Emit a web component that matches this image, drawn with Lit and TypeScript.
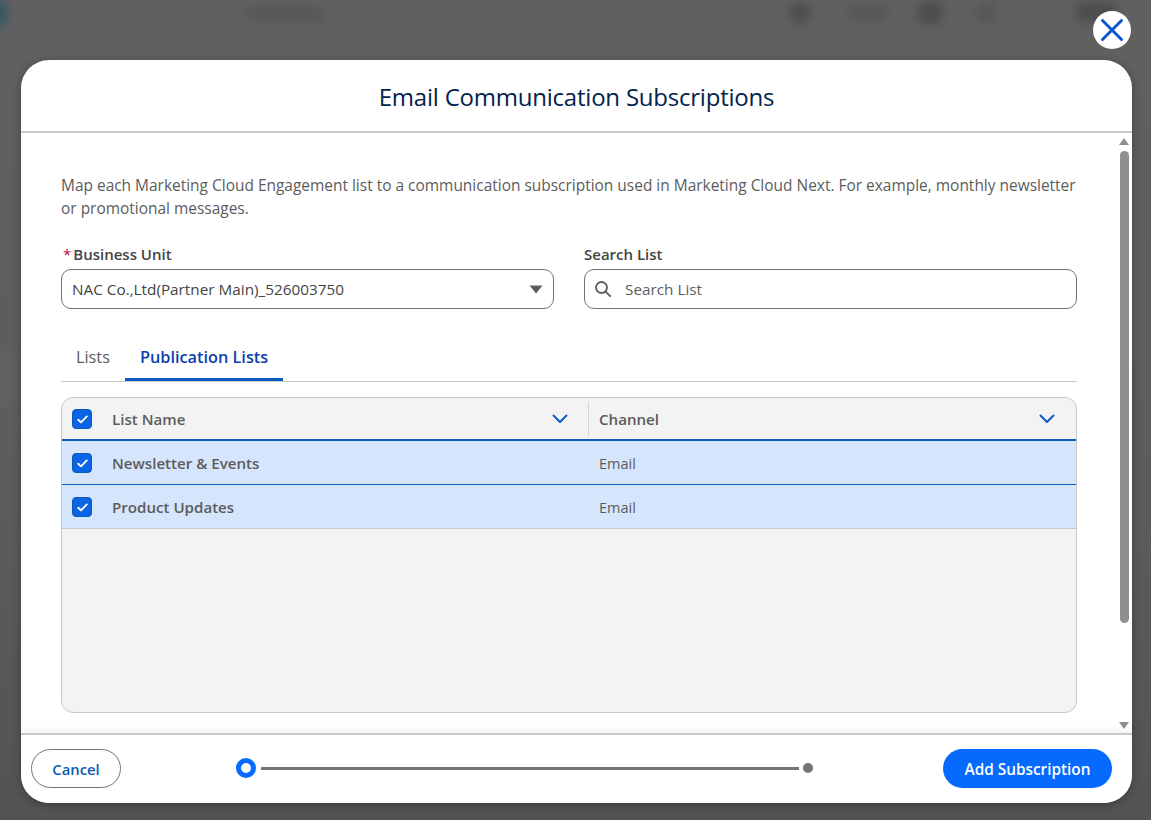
import { LitElement, html, css, svg } from 'lit';
import { customElement } from 'lit/decorators.js';

const chevron = svg`<svg class="chev" width="16" height="10" viewBox="0 0 16 10"><path d="M1.5 1.5 8 8l6.5-6.5" fill="none" stroke="#0b57c9" stroke-width="2" stroke-linecap="round" stroke-linejoin="round"/></svg>`;

const rows = [
  { name: 'Newsletter & Events', channel: 'Email' },
  { name: 'Product Updates', channel: 'Email' },
];

@customElement('app-root')
export class AppRoot extends LitElement {
  static styles = css`
    :host {
      display: block;
      position: relative;
      height: 820px;
      overflow: hidden;
      background: linear-gradient(#606060, #5c5c5c 60%, #535353);
      font-family: 'Open Sans', 'Noto Sans', sans-serif;
      color: #444;
      box-sizing: border-box;
      padding: 60px 19px 17px 21px;
    }
    * { box-sizing: border-box; }

    .backdrop { position: absolute; inset: 0; filter: blur(5px); }
    .smudge { position: absolute; background: #4d4d4d; border-radius: 6px; }
    .smudge.teal { background: #2f5766; }
    .smudge.pale { background: #646464; }
    .smudge.faint { background: #565656; }

    .close {
      position: absolute;
      top: 11px;
      left: 1093px;
      width: 38px;
      height: 38px;
      border-radius: 50%;
      background: #fff;
      border: 0;
      padding: 0;
      display: flex;
      align-items: center;
      justify-content: center;
    }

    .modal {
      position: relative;
      height: 743px;
      background: #fff;
      border-radius: 28px;
      display: flex;
      flex-direction: column;
      overflow: hidden;
      box-shadow: 0 2px 8px rgba(0, 0, 0, 0.3);
    }

    .head {
      height: 73px;
      flex: none;
      border-bottom: 2px solid #c9c9c9;
      display: flex;
      align-items: center;
      justify-content: center;
      padding-top: 2px;
    }
    h1 {
      margin: 0;
      font-size: 24px;
      font-weight: 400;
      color: #03234d;
      letter-spacing: -0.22px;
    }

    .scroll { flex: 1; min-height: 0; position: relative; display: flex; }
    .body { flex: 1; min-width: 0; padding: 41px 42px 0 40px; }

    .intro {
      margin: 0 0 24px;
      font-size: 15.46px;
      line-height: 23px;
      color: #5c5c5c;
    }

    .fields { display: grid; grid-template-columns: 493px 493px; column-gap: 30px; }
    .field label {
      display: block;
      font-size: 15px;
      font-weight: 600;
      line-height: 20px;
      color: #444;
      margin-bottom: 5px;
    }
    .req { color: #b5084f; margin-right: 2px; margin-left: 2px; font-weight: 400; }
    .input {
      height: 40px;
      border: 1px solid #747474;
      border-radius: 10px;
      display: flex;
      align-items: center;
      font-size: 15.3px;
      color: #444;
      padding: 0 10px;
    }
    .input .grow { flex: 1; }
    .input .search { margin-left: -1px; }
    .input .ph { color: #5c5c5c; margin-left: 13px; flex: 1; }

    .tabs {
      margin-top: 28px;
      height: 45px;
      border-bottom: 1px solid #c9c9c9;
      display: flex;
    }
    .tab {
      font-size: 16.3px;
      line-height: 40px;
      padding: 0 15px;
      color: #5c5c5c;
      height: 44px;
    }
    .tab.on {
      color: #0b3fb0;
      font-weight: 600;
      border-bottom: 3px solid #0b5cc0;
    }

    .table {
      margin-top: 15px;
      height: 316px;
      border: 1px solid #c9c9c9;
      border-radius: 12px;
      background: #f3f3f3;
      overflow: hidden;
    }
    .row {
      height: 44px;
      display: grid;
      grid-template-columns: 526px 1fr;
      align-items: center;
      font-size: 15.1px;
      color: #5c5c5c;
    }
    .row.top { height: 43px; border-bottom: 2px solid #0b5cb5; }
    .row.sel { background: #d5e5fc; border-bottom: 1px solid #0b5cb5; font-size: 14.5px; }
    .row.sel.last { border-bottom: 1px solid #c9c9c9; }
    .cell { display: flex; align-items: center; height: 100%; }
    .first { padding-left: 10px; padding-right: 20px; }
    .second { padding-left: 11px; padding-right: 21px; }
    .sel .second { padding-top: 1px; }
    .top .second { border-left: 1px solid #d4d4d4; height: 34px; padding-left: 10px; }
    .top .cell { font-weight: 600; }
    .sel .first { font-weight: 600; font-size: 15.1px; }
    .cell .text { flex: 1; }
    .check {
      width: 20px;
      height: 20px;
      border-radius: 4px;
      background: #0b63e5;
      border: 1px solid #0b5cb5;
      display: flex;
      align-items: center;
      justify-content: center;
      margin: 1px 20px 0 0;
      flex: none;
    }

    .bar { width: 13px; flex: none; position: relative; }
    .thumb {
      position: absolute;
      top: 18px;
      left: 1px;
      width: 9px;
      height: 472px;
      border-radius: 5px;
      background: #8f8f8f;
    }
    .arrow { position: absolute; left: 0; }
    .arrow.up { top: 5px; }
    .arrow.down { bottom: 4px; }

    .foot {
      position: relative;
      height: 70px;
      flex: none;
      border-top: 2px solid #c9c9c9;
      box-shadow: 0 -3px 5px rgba(0, 0, 0, 0.05);
      background: #fff;
      display: flex;
      align-items: center;
      padding: 0 20px 2px 10px;
    }
    .btn {
      height: 39px;
      border-radius: 20px;
      font-family: inherit;
      font-weight: 600;
      padding: 1px 0 0;
    }
    .cancel { width: 90px; background: #fff; border: 1px solid #747474; color: #0b5cb5; font-size: 14.8px; }
    .add { width: 169px; background: #066afe; border: 0; color: #fff; font-size: 15.35px; margin-left: auto; }

    .steps { display: flex; align-items: center; width: 577px; margin-left: 115px; }
    .dot-on { width: 20px; height: 20px; border-radius: 50%; border: 5px solid #066afe; background: #fff; flex: none; }
    .line { flex: 1; height: 3px; background: #747474; margin: 0 4px 0 5px; }
    .dot { width: 10px; height: 10px; border-radius: 50%; background: #747474; flex: none; }
  `;

  renderCheck() {
    return html`<span class="check">
      <svg width="11" height="9" viewBox="0 0 11 9"><path d="M1.2 4.8 4 7.4l5.8-6" fill="none" stroke="#fff" stroke-width="1.9" stroke-linecap="round" stroke-linejoin="round"/></svg>
    </span>`;
  }

  render() {
    return html`
      <div class="backdrop">
        <div class="smudge teal" style="left:-6px;top:0;width:12px;height:26px"></div>
        <div class="smudge pale" style="left:0;top:350px;width:10px;height:60px"></div>
        <div class="smudge faint" style="left:246px;top:8px;width:78px;height:12px"></div>
        <div class="smudge" style="left:790px;top:3px;width:20px;height:20px"></div>
        <div class="smudge faint" style="left:848px;top:6px;width:40px;height:14px"></div>
        <div class="smudge" style="left:918px;top:2px;width:24px;height:22px"></div>
        <div class="smudge faint" style="left:976px;top:4px;width:20px;height:18px"></div>
        <div class="smudge" style="left:1076px;top:2px;width:40px;height:20px"></div>
      </div>

      <div class="modal">
        <div class="head"><h1>Email Communication Subscriptions</h1></div>
        <div class="scroll">
          <div class="body">
            <p class="intro">Map each Marketing Cloud Engagement list to a communication subscription used in Marketing Cloud Next. For example, monthly newsletter or promotional messages.</p>
            <div class="fields">
              <div class="field">
                <label><span class="req">*</span>Business Unit</label>
                <div class="input">
                  <span class="grow">NAC Co.,Ltd(Partner Main)_526003750</span>
                  <svg width="14" height="9" viewBox="0 0 14 9"><path d="M.5.5h13L7 8.5z" fill="#5c5c5c"/></svg>
                </div>
              </div>
              <div class="field">
                <label>Search List</label>
                <div class="input">
                  <svg class="search" width="18" height="18" viewBox="0 0 18 18"><circle cx="7.5" cy="7.5" r="5.5" fill="none" stroke="#5c5c5c" stroke-width="1.8"/><path d="m11.6 11.6 4.6 4.6" stroke="#5c5c5c" stroke-width="1.8" stroke-linecap="round"/></svg>
                  <span class="ph">Search List</span>
                </div>
              </div>
            </div>

            <div class="tabs">
              <div class="tab">Lists</div>
              <div class="tab on">Publication Lists</div>
            </div>

            <div class="table">
              <div class="row top">
                <div class="cell first">${this.renderCheck()}<span class="text">List Name</span>${chevron}</div>
                <div class="cell second"><span class="text">Channel</span>${chevron}</div>
              </div>
              ${rows.map(
                (r, i) => html`<div class="row sel ${i === rows.length - 1 ? 'last' : ''}">
                  <div class="cell first">${this.renderCheck()}<span class="text">${r.name}</span></div>
                  <div class="cell second"><span class="text">${r.channel}</span></div>
                </div>`
              )}
            </div>
          </div>
          <div class="bar">
            <svg class="arrow up" width="10" height="7" viewBox="0 0 10 7"><path d="M5 0l5 7H0z" fill="#8f8f8f"/></svg>
            <div class="thumb"></div>
            <svg class="arrow down" width="10" height="7" viewBox="0 0 10 7"><path d="M0 0h10L5 7z" fill="#8f8f8f"/></svg>
          </div>
        </div>
        <div class="foot">
          <button class="btn cancel">Cancel</button>
          <div class="steps">
            <span class="dot-on"></span>
            <span class="line"></span>
            <span class="dot"></span>
          </div>
          <button class="btn add">Add Subscription</button>
        </div>
      </div>

      <button class="close" aria-label="Close">
        <svg width="24" height="24" viewBox="0 0 24 24"><path d="M2.5 2.5l19 19M21.5 2.5l-19 19" stroke="#0b57c9" stroke-width="3" stroke-linecap="round"/></svg>
      </button>
    `;
  }
}
